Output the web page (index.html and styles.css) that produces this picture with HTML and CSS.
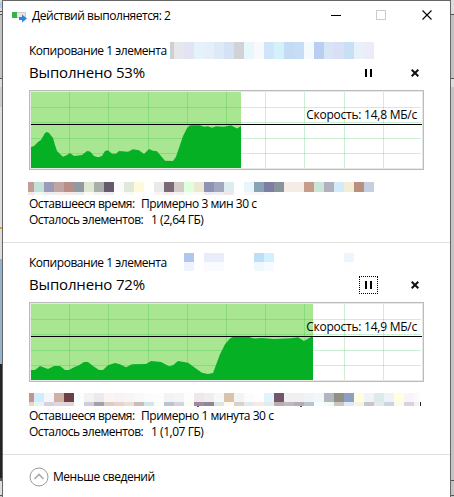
FILE: index.html
```html
<!DOCTYPE html>
<html lang="ru">
<head>
<meta charset="utf-8">
<title>Действий выполняется: 2</title>
<link rel="stylesheet" href="styles.css">
</head>
<body>
<div class="desktop">
  <div class="edge edge-left"></div>
  <main class="window">
    <header class="titlebar">
      <svg class="app-icon" width="15" height="12" viewBox="0 0 15 12">
        <rect x=".5" y="1.500" width="13" height="5" fill="#e6e6e6" stroke="#cdcdcd"/>
        <rect y="1" width="5" height="6" fill="#35b24a"/>
        <path d="M7 6h3V3.500l5 4-5 4V9H7z" fill="#2f86d8"/>
      </svg>
      <h1 class="title">Действий выполняется: 2</h1>
      <svg class="controls" width="102" height="12" viewBox="0 0 102 12" fill="none">
        <path d="M0 6.500h10" stroke="#000"/>
        <rect x="45.500" y="1.500" width="9" height="9" stroke="#ccc"/>
        <path d="M91.500 1.500l9 9M100.500 1.500l-9 9" stroke="#000" stroke-width="1.100"/>
      </svg>
    </header>

    <section class="job">
      <div class="source"><span class="text">Копирование 1 элемента .</span><div class="mosaic m-source" data-mosaic="name1"></div></div>
      <div class="status">
        <h2 class="percent">Выполнено 53%</h2>
        <span class="pause"><svg width="7" height="8"><path d="M0 0h2v8H0zM5 0h2v8H5z"/></svg></span>
        <svg class="cancel" width="8" height="8" viewBox="0 0 8 8"><path d="M.7 .7l6.600 6.600M7.300 .7L.7 7.300" stroke="#111" stroke-width="2"/></svg>
      </div>
      <div class="graph">
        <svg width="391" height="76" viewBox="2 2 391 76">
          <path class="done" d="M2 2h210v76H2z"/>
          <path class="grid" d="M2 17.500H392M2 32.500H392M2 48.500H392M2 63.500H392M40.500 2v76M79.500 2v76M119.500 2v76M158.500 2v76M197.500 2v76M236.500 2v76M275.500 2v76M315.500 2v76M354.500 2v76"/>
          <path class="wave" d="M2 78V57L5 56 9 52 12 50 16 43 18 42 20 43 24 48 26 55 28 61 32 65 34 66.700 38 65 41 63 45 66 53 65 58 61 61 61.500 65 66 69 67.300 73 66 76 61 79 60.300 83 63.700 87 63.700 90 61 99 61.700 104 59.300 110 60.300 115 64 120 59 124 60.700 128 61.300 132 66 136 70.700 144 71 147 66.700 151 55 154 46 158 38.300 161 35.300H171L175 36.700 179 36.200 183 37.700 187 36.200 195 36.700 202 35.300 208 38.500 212 36V78z"/>
          <path class="speed-line" d="M2 34.500H393"/>
        </svg>
        <span class="speed">Скорость: 14,8 МБ/с</span>
      </div>
      <div class="mosaic m-name" data-mosaic="name2"></div>
      <p class="line"><span class="k1">Оставшееся время:</span><span class="v1">Примерно 3 мин 30 с</span></p>
      <p class="line"><span class="k2">Осталось элементов:</span><span class="v2">1 (2,64 ГБ)</span></p>
    </section>

    <section class="job second">
      <div class="source"><span class="text">Копирование 1 элемента</span><div class="mosaic m-source" data-mosaic="name3"></div></div>
      <div class="status">
        <h2 class="percent">Выполнено 72%</h2>
        <span class="pause focused"><svg width="7" height="8"><path d="M0 0h2v8H0zM5 0h2v8H5z"/></svg></span>
        <svg class="cancel" width="8" height="8" viewBox="0 0 8 8"><path d="M.7 .7l6.600 6.600M7.300 .7L.7 7.300" stroke="#111" stroke-width="2"/></svg>
      </div>
      <div class="graph">
        <svg width="391" height="76" viewBox="2 2 391 76">
          <path class="done" d="M2 2h282v76H2z"/>
          <path class="grid" d="M2 17.500H392M2 32.500H392M2 48.500H392M2 63.500H392M40.500 2v76M79.500 2v76M119.500 2v76M158.500 2v76M197.500 2v76M236.500 2v76M275.500 2v76M315.500 2v76M354.500 2v76"/>
          <path class="wave" d="M2 78V68H6L11 64 19 67 25 64 31 64 36 68 40 68 46 64.700 50 63.300 55 60 59 60 64 64 70 68 74 68 79 63.300 86 61 91 62.300 97 65.300 103 62.300 117 62 122 59 132 60 140 64.300 144 63.300 149 59 159 60.700 168 67.300 173 70.700 179 72 184 71 187 63 191 52.300 196 42.300 201 36.500 204 35H220L225 36.500 233 36 245 37 262 36.300 269 35.300 275 39 282 35H284V78z"/>
          <path class="speed-line" d="M2 34.500H393"/>
        </svg>
        <span class="speed">Скорость: 14,9 МБ/с</span>
      </div>
      <div class="mosaic m-name" data-mosaic="name4"></div>
      <p class="line"><span class="k1">Оставшееся время:</span><span class="v1">Примерно 1 минута 30 с</span></p>
      <p class="line"><span class="k2">Осталось элементов:</span><span class="v2">1 (1,07 ГБ)</span></p>
    </section>

    <footer class="footer">
      <svg width="20" height="20" viewBox="0 0 20 20" fill="none"><circle cx="10" cy="10" r="9" stroke="#999"/><path d="M5.500 12L10 7.500l4.500 4.500" stroke="#aaa" stroke-width="1.600"/></svg>
      <span class="less">Меньше сведений</span>
    </footer>
  </main>
  <div class="edge edge-right"></div>
</div>
<script src="mosaic.js"></script>
</body>
</html>
```
FILE: styles.css
```css
body { margin: 0; overflow: hidden; font: 12px/16px "Open Sans", "Noto Sans", sans-serif; letter-spacing: -.46px; color: #000; }
h1, h2, p { margin: 0; font-weight: 400; }
svg { display: block; flex: none; }
.desktop { display: grid; grid-template-columns: 2px 449px 3px; height: 497px; }
.window { box-sizing: border-box; border: 1px solid #666; border-bottom: 0; background: #fff; overflow: hidden; }
.edge-left { background: linear-gradient(#ddd 2px, #a9cde2 2px 8px, #ddd 8px 11px, #555 11px 12px, #ddd 12px 14px, #555 14px 15px, #c4c4c4 15px 78px, #555 78px 79px, #ddd 79px 87px, #ccc 87px 107px, #e0e0e0 107px 227px, #d9a520 227px 229px, #ddd 229px 259px, #94b5cc 259px 364px, #242424 364px 478px, #555 478px 481px, #ddd 481px 495px, #555 495px 496px, #ccc 496px); }
.edge-right { background: linear-gradient(#ddd 14px, #555 14px 15px, #c2c2c2 15px 78px, #555 78px 79px, #ddd 79px 87px, #c4c4c4 87px 480px, #555 480px 481px, #c4c4c4 481px 495px, #555 495px 496px, #ccc 496px); }
.titlebar { display: flex; height: 30px; }
.app-icon { margin: 10px 5px 0 9px; }
.title { width: 299px; margin-top: 7px; font-size: 12px; line-height: 16px; white-space: nowrap; }
.controls { margin-top: 8px; }
.job { box-sizing: border-box; height: 212px; padding: 11px 26px 0; border-bottom: 1px solid #dfdfdf; }
.source { display: flex; height: 18px; white-space: nowrap; }
.source .text { width: 141px; line-height: 18px; letter-spacing: -.46px; }
.mosaic-row { display: flex; }
.mosaic-row > div { flex: none; }
.status { display: flex; align-items: center; height: 24px; }
.percent { width: 330px; font-size: 15px; line-height: 22px; letter-spacing: -.15px; }
.pause { box-sizing: border-box; display: flex; align-items: center; justify-content: center; width: 19px; height: 18px; margin-top: 2px; border: 1px dotted transparent; }
.pause.focused { border-color: #000; }
.cancel { margin: 2px 0 0 33px; }
.graph { position: relative; box-sizing: border-box; width: 395px; height: 80px; margin-top: 6px; padding: 1px; border: 1px solid #bbb; background: #e8e8e8; }
.graph svg { background: #fff; }
.done { fill: #a8e692; }
.grid { stroke: #06b025; stroke-opacity: .2; }
.wave { fill: #06b025; }
.speed-line { stroke: #000; }
.speed { position: absolute; right: 6px; top: 16px; letter-spacing: -.24px; white-space: nowrap; }
.m-name { height: 14px; margin: 12px 0 0 -1px; }
.second .m-source { margin-top: -1px; }
.second .m-name { margin: 11px 0 1px; }
.line { display: flex; height: 16px; white-space: nowrap; }
.k1 { width: 112px; }
.k2 { width: 122px; }
.footer { display: flex; align-items: center; gap: 4px; height: 43px; padding-left: 26px; }
```
FILE: mosaic.js
```js
// Each strip is a list of rows: height, then cells as "width:colour"; cells are 10px wide by default.
const strips = {
  name1: [[17, "4:cdd0d3 e5e7eb e2e4f3 e4f3fb e6eefa dceaf7 d5e2f6 d0d2d6 e8f7fc f7f9fc d1e5fa d4f0f8 c5dbf5 c6ddf6 f5faff b9cef0 d8e5f6 d9dff5 c8e0f6 e8f0fa ebecf7"]],
  name2: [[10, "6:c59c97 c5e0d9 9b9ab8 c0a5a2 b88f88 9299a3 dee8d1 a8aea9 66596d f9fbfb dfe8d9 fff9dc fffffb eae9ec 7b6a76 d3cbc7 e0ffdc ebe9d4 9092b3 a1a8be deebf0 ffffff e8f6fc 88a3b5 7e7ea4 87959b f5ece7 f5ece7 c69d8b cbe5d7 b0b1bd d3eafa f3edd5 b99080 c6cfdf"],
          [3, "6:f2e9e8 f0f7f5 eeedf3 f3edec f3ebea ebecef fafbf6 f1f2f1 f1edf2 ffffff fafbf9 fffffa ffffff faf3f6 f4ecf0 f5f2f2 f6fff5 fbfaf5 eaebf3 eeeff4 efe7eb ffffff f8f8fc fbf6fa fdfbfe"]],
  name3: [[9, "14:ffffff b1c6ed ffffff 20:e8edf9 30:ffffff bfdef7 d2f0fd 70:ffffff edf6fe"],
          [9, "14:ffffff eef3fd ffffff 20:fafbfe 30:ffffff f0f8fd f5fbfe 70:ffffff fcfeff"]],
  name4: [[9, "5:c3948e cfeefd f6f6f9 cfb0a6 6d4048 f8ffff f3f3f5 ebebee faf4f3 f8f3f3 f8f5f7 f9f9fa fbfcfe fbfdfe f2f3f5 f4f5f7 fdfdfd eee8ec eeeef2 f7f9f9 d8c3ad f5f4f4 fafcfe ffffff e0f4fd 72566b f1f0f1 f0f0f0 f1f3f6 f2f7fc b0b7c0 928f83 8f9fc3 fffee0 f3f2f6 dceaea eef3f7 ffffdf f7f5f8 5:fafafc"],
          [4, "5:ead6c9 ebf3f1 d5d2dd e0d6dc e2d5d5 f9ffff cdced8 a6a0a8 dbcdc4 e8d4cf ebe0d9 c9bcba d3e5f0 fafcfa bcc3cf d2d5e0 fbfbf0 a487a2 8f8793 dae6e4 fffaeb dbd0ca e3eaef f6eae3 e2ecec bbadae bdb9c0 b4acb5 b9c6d0 f3ffff effaf5 c9c6c0 dfe9f5 f5f4e0 c7c6cf e4e9eb cad5e2 fcfbeb dcd0dc 5:f5f0f5 1:ffffff 1:222222"],
          [1, "168:ffffff 2:555555 101:ffffff 2:555555"]]
};

document.querySelectorAll("[data-mosaic]").forEach(strip => {
  for (const [height, cells] of strips[strip.dataset.mosaic]) {
    const row = document.createElement("div");
    row.className = "mosaic-row";
    for (const cell of cells.split(" ")) {
      const [width, color] = cell.includes(":") ? cell.split(":") : [10, cell];
      const block = document.createElement("div");
      block.style.cssText = `width:${width}px;height:${height}px;background:#${color}`;
      row.append(block);
    }
    strip.append(row);
  }
});
```
